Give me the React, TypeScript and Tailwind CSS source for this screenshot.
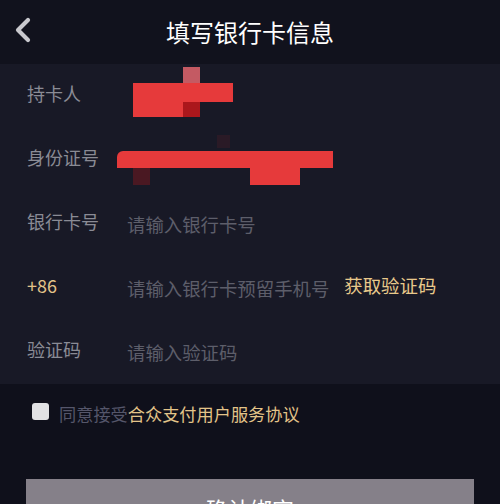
import React from "react";

const font = { fontFamily: '"Noto Sans CJK SC", "Noto Sans", sans-serif' };

function Row({
  label,
  labelClass = "text-[#8a8b95]",
  placeholder,
  extra,
  children,
}: {
  label: string;
  labelClass?: string;
  placeholder?: string;
  extra?: React.ReactNode;
  children?: React.ReactNode;
}) {
  return (
    <div className="relative flex h-16 items-center pl-[27px]">
      <div className={`mb-[6px] w-[100px] text-[18px] leading-none ${labelClass}`}>{label}</div>
      {placeholder && (
        <div className="mt-[1px] text-[18.4px] leading-none text-[#5d5e6a]">{placeholder}</div>
      )}
      {extra}
      {children}
    </div>
  );
}

export default function App() {
  return (
    <div className="h-[504px] w-[500px] overflow-hidden bg-[#0f101b]" style={font}>
      {/* header */}
      <div className="relative flex h-16 items-center justify-center bg-[#11121d]">
        <svg
          className="absolute left-[13px] top-[17px]"
          width="19"
          height="26"
          viewBox="0 0 19 26"
          fill="none"
        >
          <path
            d="M15 3 L5 13 L15 23"
            stroke="#c9c9ce"
            strokeWidth="4.2"
            strokeLinecap="round"
            strokeLinejoin="round"
          />
        </svg>
        <div className="text-[24px] leading-none text-white">填写银行卡信息</div>
      </div>

      {/* form */}
      <div className="bg-[#181926]">
        <Row label="持卡人">
          <div className="absolute left-[183px] top-[3px] h-[16px] w-[17px] bg-[#c45a63]" />
          <div className="absolute left-[133px] top-[19px] h-[19px] w-[100px] bg-[#e63a3b]" />
          <div className="absolute left-[133px] top-[38px] h-[15px] w-[50px] bg-[#e63a3b]" />
          <div className="absolute left-[183px] top-[38px] h-[15px] w-[17px] bg-[#ab171c]" />
        </Row>
        <Row label="身份证号">
          <div className="absolute left-[217px] top-[7px] h-[13px] w-[13px] bg-[#2a1a26]" />
          <div className="absolute left-[117px] top-[23px] h-[17px] w-[216px] rounded-tl-[6px] bg-[#e63a3b]" />
          <div className="absolute left-[250px] top-[40px] h-[17px] w-[50px] bg-[#e63a3b]" />
          <div className="absolute left-[133px] top-[40px] h-[17px] w-[17px] bg-[#4a1822]" />
        </Row>
        <Row label="银行卡号" placeholder="请输入银行卡号" />
        <Row
          label="+86"
          labelClass="text-[#e3c489]"
          placeholder="请输入银行卡预留手机号"
          extra={
            <div className="mb-[5px] ml-[15px] text-[18.4px] leading-none text-[#e8c98b]">获取验证码</div>
          }
        />
        <Row label="验证码" placeholder="请输入验证码" />
      </div>

      {/* agreement */}
      <div className="flex h-[55px] items-center pl-[32px]">
        <div className="h-[17px] w-[17px] rounded-[3px] bg-[#e2e2e4]" />
        <div className="ml-[10px] mt-[4px] text-[17.2px] leading-none">
          <span className="text-[#55566a]">同意接受</span>
          <span className="text-[#e3c489]">合众支付用户服务协议</span>
        </div>
      </div>

      {/* button */}
      <div className="mx-[26px] mt-[40px] flex h-[58px] items-center justify-center bg-[#858089]">
        <span className="text-[22px] leading-none text-white">确认绑定</span>
      </div>
    </div>
  );
}
